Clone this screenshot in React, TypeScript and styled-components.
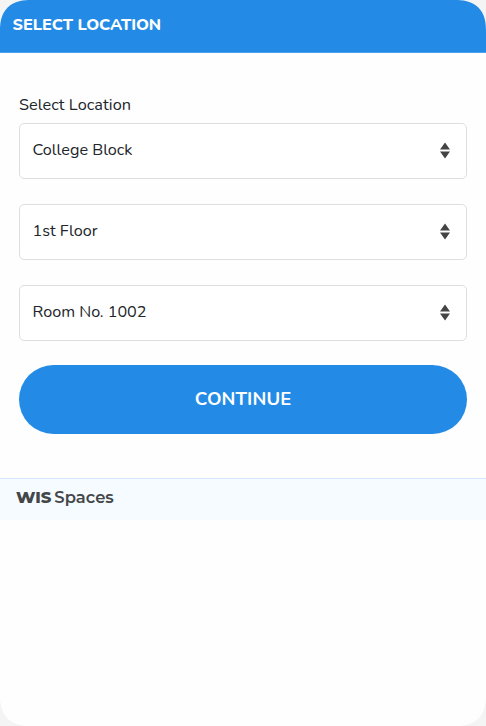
import React from "react";
import styled, { createGlobalStyle } from "styled-components";

const GlobalStyle = createGlobalStyle`
  * { box-sizing: border-box; }
  body { margin: 0; background: #f4f4f4; font-family: "Nunito", "Noto Sans", sans-serif; }
`;

const Screen = styled.main`
  width: 486px;
  height: 726px;
  overflow: hidden;
  border-radius: 31px;
  corner-shape: superellipse(1.3);
  background: #fefefe;
`;

const Header = styled.header`
  height: 53px;
  padding: 0 12.5px 3px;
  display: flex;
  align-items: center;
  background: #238be6;
  border-bottom: 1px solid #4ba1eb;
`;

const Title = styled.h1`
  margin: 0;
  color: #fff;
  font-size: 16.3px;
  line-height: 22px;
  font-weight: 800;
  letter-spacing: -0.04px;
`;

const Form = styled.form`
  height: 425px;
  padding: 41px 19px 0;
  display: flex;
  flex-direction: column;
`;

const Label = styled.label`
  height: 22px;
  margin-bottom: 7px;
  color: #212529;
  font-size: 16.3px;
  line-height: 22px;
  letter-spacing: 0.05px;
  white-space: nowrap;
`;

const Field = styled.div`
  width: 448px;
  height: 56px;
  margin-bottom: 25px;
  padding: 0 16px 2px 12.5px;
  display: flex;
  align-items: center;
  justify-content: space-between;
  border: 1px solid #dedede;
  border-radius: 5px;
  background: #fff;
  color: #212529;
  font-size: 16.2px;
  line-height: 22px;
`;

const Arrows = styled.svg`
  display: block;
  width: 11px;
  height: 17px;
  fill: #444;
`;

const Continue = styled.button`
  width: 448px;
  height: 69px;
  margin-top: -1px;
  padding: 0 0 1px;
  border: 0;
  border-radius: 34.5px;
  background: #238be6;
  color: #fff;
  font-family: inherit;
  font-size: 18.5px;
  line-height: 26px;
  font-weight: 700;
  letter-spacing: 0.1px;
`;

const Footer = styled.footer`
  height: 42px;
  padding: 0 16px 5px;
  display: flex;
  align-items: center;
  gap: 3px;
  border-top: 1px solid #d3e9fb;
  background: #f5fbff;
  color: #444749;
  font-family: "Montserrat", "Inter", sans-serif;
  font-size: 16.4px;
  line-height: 20px;
`;

const Brand = styled.strong`
  font-weight: 800;
`;

const Product = styled.span`
  font-weight: 600;
`;

const options = ["College Block", "1st Floor", "Room No. 1002"];

export default function App() {
  return (
    <>
      <GlobalStyle />
      <Screen>
        <Header><Title>SELECT LOCATION</Title></Header>
        <Form>
          <Label>Select Location</Label>
          {options.map((name) => (
            <Field key={name}>
              <span>{name}</span>
              <Arrows viewBox="0 0 11 17" aria-hidden="true">
                <path d="M6 0.5 11 7.5H1ZM1 9.5H11L6 16.5Z" />
              </Arrows>
            </Field>
          ))}
          <Continue type="button">CONTINUE</Continue>
        </Form>
        <Footer><Brand>WIS</Brand><Product>Spaces</Product></Footer>
      </Screen>
    </>
  );
}
